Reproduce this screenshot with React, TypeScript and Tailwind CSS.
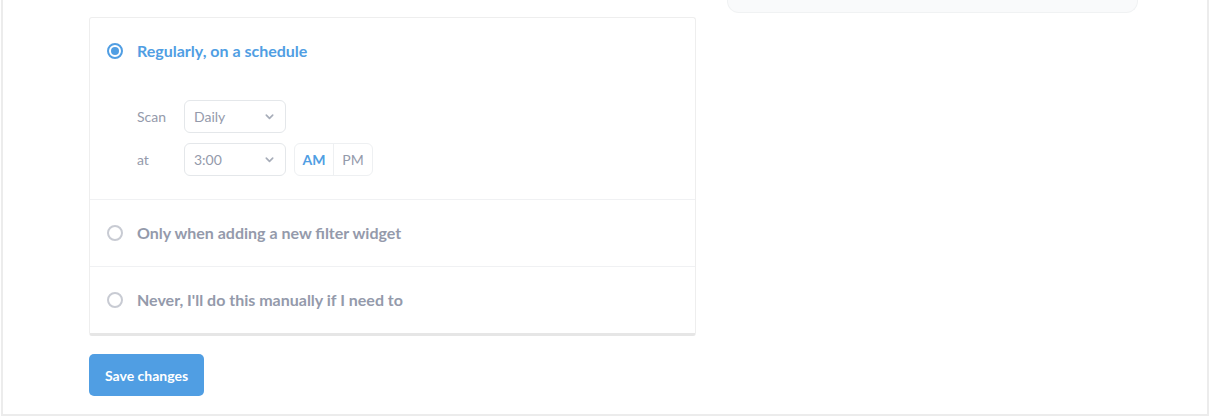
import React from "react";

const font = { fontFamily: "Lato, 'Open Sans', sans-serif" };

function Radio({ checked }: { checked?: boolean }) {
  return checked ? (
    <span className="flex h-[16px] w-[16px] items-center justify-center rounded-full border-2 border-[#509ee3]">
      <span className="h-[8px] w-[8px] rounded-full bg-[#509ee3]" />
    </span>
  ) : (
    <span className="h-[16px] w-[16px] rounded-full border-2 border-[#c8cbd3]" />
  );
}

function Chevron() {
  return (
    <svg width="11" height="11" viewBox="0 0 12 12" fill="none" stroke="#a7adb9" strokeWidth="1.8" strokeLinecap="round" strokeLinejoin="round">
      <path d="M2.5 4.5 6 8l3.5-3.5" />
    </svg>
  );
}

function Select({ value }: { value: string }) {
  return (
    <div className="flex h-[33px] w-[102px] items-center justify-between rounded-md border border-[#e4e7ea] pl-[9px] pr-[10px] text-[14px] text-[#949aab]">
      <span>{value}</span>
      <Chevron />
    </div>
  );
}

function Option({ label, checked, children, last }: { label: string; checked?: boolean; children?: React.ReactNode; last?: boolean }) {
  return (
    <div className={`pl-[17px] pr-[18px] ${last ? "" : "border-b border-[#f0f1f3]"} ${children ? "pt-[23px] pb-[23px]" : "py-[23px]"}`}>
      <div className="flex h-[20px] items-center gap-[14px]">
        <Radio checked={checked} />
        <span className={`text-[16px] font-bold ${checked ? "text-[#509ee3]" : "text-[#949aab]"}`}>{label}</span>
      </div>
      {children}
    </div>
  );
}

export default function App() {
  return (
    <div style={font} className="bg-white">
      <div className="ml-px flex h-[416px] w-[1208px] items-start border-x-2 border-b-2 border-[#ececec] bg-white pl-[86px]">
        <div className="mt-[17px] w-[607px]">
          <div className="rounded-[3px] border border-b-[3px] border-[#eeeeee] border-b-[#e6e6e6] bg-white">
            <Option label="Regularly, on a schedule" checked>
              <div className="mt-[39px] flex flex-col gap-[10px] pl-[30px]">
                <div className="flex items-center">
                  <span className="w-[47px] text-[14px] text-[#949aab]">Scan</span>
                  <Select value="Daily" />
                </div>
                <div className="flex items-center">
                  <span className="w-[47px] text-[14px] text-[#949aab]">at</span>
                  <Select value="3:00" />
                  <div className="ml-[8px] flex h-[33px] rounded-md border border-[#eef0f2] text-[14px]">
                    <span className="flex w-[39px] items-center justify-center border-r border-[#eef0f2] font-bold text-[#509ee3]">AM</span>
                    <span className="flex w-[38px] items-center justify-center text-[#949aab]">PM</span>
                  </div>
                </div>
              </div>
            </Option>
            <Option label="Only when adding a new filter widget" />
            <Option label="Never, I'll do this manually if I need to" last />
          </div>
          <button className="mt-[18px] h-[42px] w-[115px] rounded-[5px] bg-[#509ee3] text-[14px] font-bold text-white">
            Save changes
          </button>
        </div>
        <div className="ml-[31px] h-[13px] w-[411px] rounded-b-xl border-x border-b border-[#f0f2f3] bg-[#f9fafb]" />
      </div>
    </div>
  );
}
